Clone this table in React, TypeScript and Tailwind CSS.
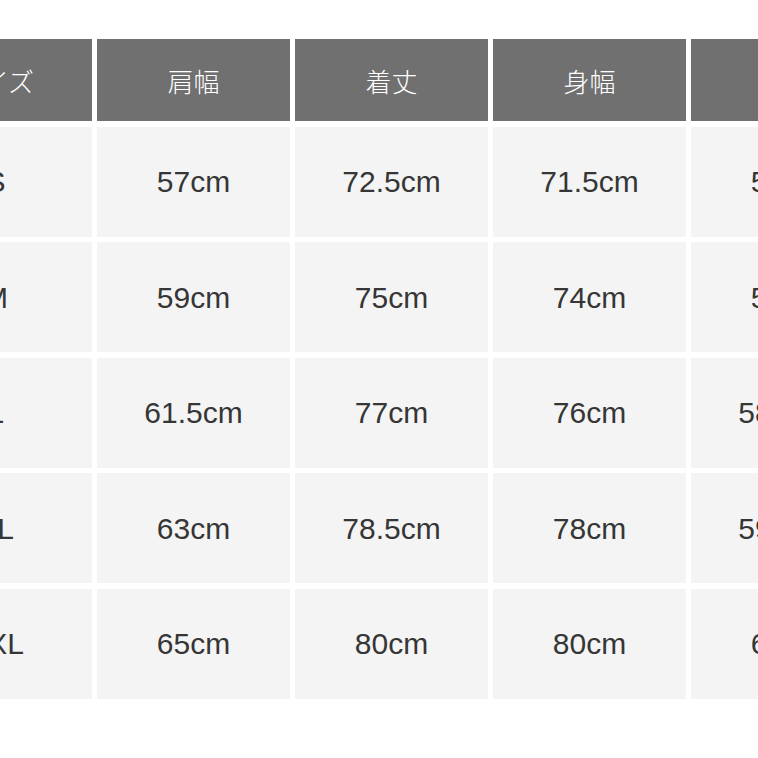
const headers = ['サイズ', '肩幅', '着丈', '身幅', '袖丈']

const rows: string[][] = [
  ['S', '57cm', '72.5cm', '71.5cm', '56cm'],
  ['M', '59cm', '75cm', '74cm', '57cm'],
  ['L', '61.5cm', '77cm', '76cm', '58.5cm'],
  ['XL', '63cm', '78.5cm', '78cm', '59.5cm'],
  ['XXL', '65cm', '80cm', '80cm', '61cm'],
]

export default function App() {
  return (
    <div
      className="h-[758px] w-[758px] overflow-hidden bg-white pt-[39px]"
      style={{ fontFamily: '"Liberation Sans", Arial, "Noto Sans CJK JP", sans-serif' }}
    >
      <div className="ml-[-101px] grid w-max grid-cols-[repeat(5,193px)] gap-x-[5px] gap-y-[5.5px]">
        {headers.map((h) => (
          <div
            key={h}
            className="flex h-[82px] items-center justify-center bg-[#707070] text-[26px] font-light text-white"
            style={{ fontFamily: '"Noto Sans CJK JP", sans-serif' }}
          >
            {h}
          </div>
        ))}
        {rows.map((row) =>
          row.map((cell, i) => (
            <div
              key={row[0] + i}
              className="flex h-[110px] items-center justify-center bg-[#f4f4f4] text-[30px] text-[#363636]"
            >
              {cell}
            </div>
          )),
        )}
      </div>
    </div>
  )
}
